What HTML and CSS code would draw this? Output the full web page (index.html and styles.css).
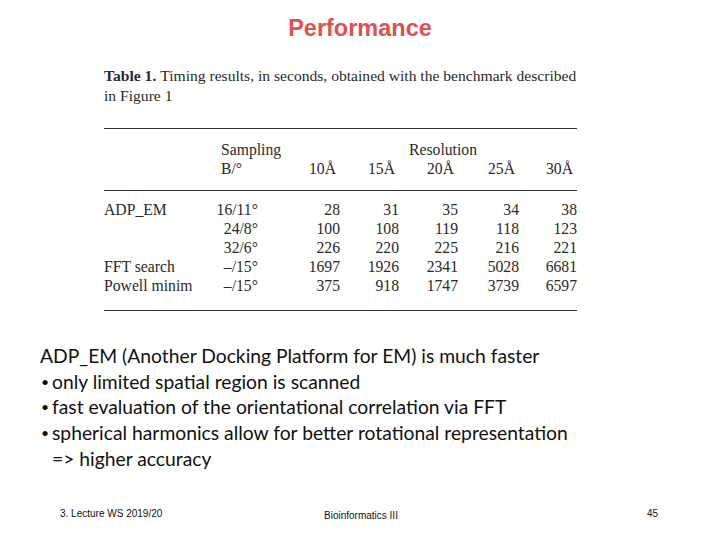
FILE: index.html
```html
<!DOCTYPE html>
<html>
<head>
<meta charset="utf-8">
<link rel="stylesheet" href="styles.css">
</head>
<body>
<div class="slide">
  <h1 class="title">Performance</h1>
  <div class="figure">
    <p class="caption"><b class="tag">Table 1. </b>Timing results, in seconds, obtained with the benchmark described in Figure 1</p>
    <table class="results">
      <colgroup>
        <col class="c-label"><col class="c-samp"><col class="c-a"><col class="c-b"><col class="c-c"><col class="c-d"><col class="c-e">
      </colgroup>
      <thead>
        <tr class="h1"><th></th><th class="left">Sampling</th><th></th><th colspan="3" class="center">Resolution</th><th></th></tr>
        <tr class="h2"><th></th><th class="left">B/°</th><th>10Å</th><th>15Å</th><th>20Å</th><th>25Å</th><th>30Å</th></tr>
      </thead>
      <tbody>
        <tr class="first"><td class="left">ADP_EM</td><td>16/11°</td><td>28</td><td>31</td><td>35</td><td>34</td><td>38</td></tr>
        <tr><td class="left"></td><td>24/8°</td><td>100</td><td>108</td><td>119</td><td>118</td><td>123</td></tr>
        <tr><td class="left"></td><td>32/6°</td><td>226</td><td>220</td><td>225</td><td>216</td><td>221</td></tr>
        <tr><td class="left">FFT search</td><td>–/15°</td><td>1697</td><td>1926</td><td>2341</td><td>5028</td><td>6681</td></tr>
        <tr class="last"><td class="left">Powell minim</td><td>–/15°</td><td>375</td><td>918</td><td>1747</td><td>3739</td><td>6597</td></tr>
      </tbody>
    </table>
  </div>
  <div class="points">
    <p class="lead">ADP_EM (Another Docking Platform for EM) is much faster</p>
    <ul class="bullets">
      <li>only limited spatial region is scanned</li>
      <li>fast evaluation of the orientational correlation via FFT</li>
      <li>spherical harmonics allow for better rotational representation<br>=&gt; higher accuracy</li>
    </ul>
  </div>
  <div class="footer">
    <span class="f-left">3. Lecture WS 2019/20</span>
    <span class="f-mid">Bioinformatics III</span>
    <span class="f-right">45</span>
  </div>
</div>
</body>
</html>
```
FILE: styles.css
```css
html, body {
  margin: 0;
  padding: 0;
  background: #ffffff;
}
.slide {
  width: 720px;
  height: 540px;
  display: flex;
  flex-direction: column;
  box-sizing: border-box;
  padding-top: 14px;
}
.title {
  margin: 0;
  text-align: center;
  font-family: "Liberation Sans", Arial, sans-serif;
  font-weight: bold;
  font-size: 23.5px;
  line-height: 28px;
  color: #e0504f;
}
.figure {
  margin-left: 104px;
  width: 473px;
  margin-top: 24px;
  font-family: "Liberation Serif", "Times New Roman", serif;
  color: #2a2a2a;
}
.caption {
  margin: 0;
  width: 480px;
  font-size: 15.6px;
  line-height: 20px;
}
.caption .tag {
  font-weight: bold;
}
.results {
  margin-top: 22px;
  width: 473px;
  table-layout: fixed;
  border-collapse: collapse;
  font-size: 15.7px;
  border-top: 1.5px solid #333;
  border-bottom: 1.5px solid #333;
}
.c-label { width: 112px; }
.c-samp { width: 42px; }
.c-a { width: 82px; }
.c-b { width: 59px; }
.c-c { width: 59px; }
.c-d { width: 61px; }
.c-e { width: 58px; }
.results th {
  font-weight: normal;
  text-align: right;
  padding: 0 4px 0 0;
  height: 19px;
  line-height: 19px;
  white-space: nowrap;
  overflow: visible;
}
.results td {
  text-align: right;
  padding: 0;
  height: 19px;
  line-height: 19px;
  white-space: nowrap;
  overflow: visible;
}
.results th.left { text-align: left; padding-left: 5px; }
.results td.left { text-align: left; }
.results th.center { text-align: center; padding: 0 0 0 27px; }
.results .h1 th { padding-top: 11px; }
.results .h2 th { padding-bottom: 12px; border-bottom: 1.5px solid #333; }
.results tr.first td { padding-top: 9px; }
.results tr.last td { padding-bottom: 15px; }
.points {
  margin-top: 32px;
  margin-left: 40px;
  font-family: "Lato", "Open Sans", sans-serif;
  font-size: 19.3px;
  line-height: 25.7px;
  color: #111;
}
.lead { margin: 0; }
.bullets {
  margin: 0;
  padding: 0;
  list-style: none;
}
.bullets li {
  position: relative;
  padding-left: 12px;
}
.bullets li::before {
  content: "•";
  position: absolute;
  left: 1px;
  font-size: 14px;
}
.footer {
  margin-top: auto;
  margin-bottom: 21px;
  display: flex;
  align-items: baseline;
  font-family: "Liberation Sans", Arial, sans-serif;
  font-size: 10px;
  color: #111;
}
.f-left { margin-left: 60px; width: 264px; }
.f-mid { position: relative; top: 2px; }
.f-right { margin-left: auto; margin-right: 62px; }
```
